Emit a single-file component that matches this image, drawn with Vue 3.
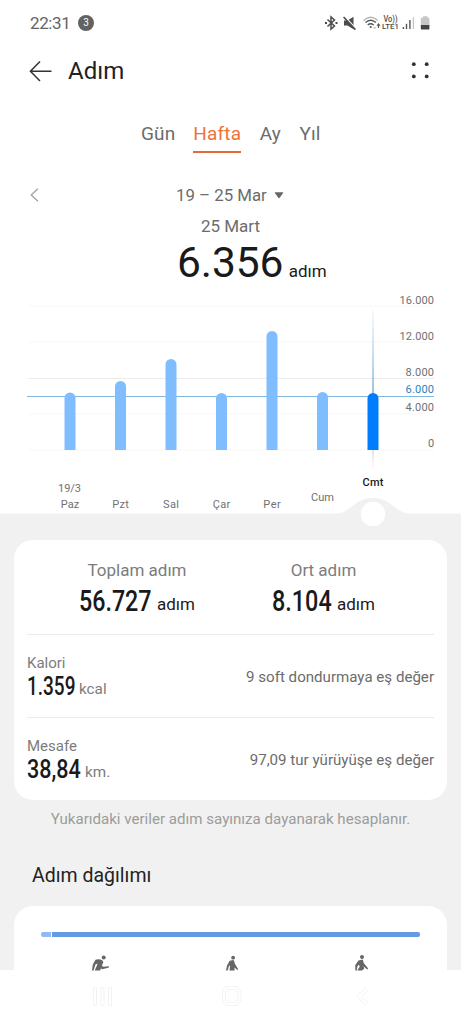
<script setup>
const grid = [306, 342, 378.5, 414, 450]
const axis = [
  { label: '16.000', y: 304, w: 34.5 },
  { label: '12.000', y: 340, w: 34.5 },
  { label: '8.000', y: 375.5, w: 28.5 },
  { label: '6.000', y: 393.3, w: 28.5, goal: true },
  { label: '4.000', y: 411.3, w: 28.5 },
  { label: '0', y: 447.3, w: 6 },
]
const bars = [
  { day: 'Paz', x: 70, top: 392.5, y: 508, w: 18.5 },
  { day: 'Pzt', x: 120.5, top: 381, y: 508, w: 16.5 },
  { day: 'Sal', x: 171, top: 359, y: 508, w: 16 },
  { day: 'Çar', x: 221.5, top: 393, y: 508, w: 17.5 },
  { day: 'Per', x: 272, top: 331, y: 508, w: 17.5 },
  { day: 'Cum', x: 322.5, top: 392, y: 501, w: 23 },
  { day: 'Cmt', x: 373, top: 393, y: 486.3, w: 21, active: true },
]
const barPath = (b) =>
  `M${b.x - 5.5} 450V${b.top + 5.5}a5.5 5.5 0 0 1 11 0V450Z`

const totals = [
  { label: 'Toplam adım', value: '56.727', kind: 'n-total' },
  { label: 'Ort adım', value: '8.104', kind: 'n-average' },
]
const metrics = [
  { label: 'Kalori', value: '1.359', kind: 'n-energy', unit: 'kcal', note: '9 soft dondurmaya eş değer' },
  { label: 'Mesafe', value: '38,84', kind: 'n-distance', unit: 'km.', note: '97,09 tur yürüyüşe eş değer' },
]
</script>

<template>
  <div class="screen">
    <div class="top">
      <div class="status">
        <span class="clock">22:31</span>
        <span class="count">3</span>
        <svg class="status-icons" width="112" height="20" viewBox="324 13 112 20">
          <g fill="none" stroke="#4c4c4c" stroke-width="1.5">
            <path d="M327.5 19.5L334.5 26L331 29V17L334.5 20L327.5 26.5" />
            <path d="M325 23h2M335.5 23h2" stroke-width="1.8" />
          </g>
          <path d="M344 20.5h3.5l6-3.8v12.6l-6-3.8H344z" fill="#4c4c4c" />
          <path d="M344 15.8L356.4 29.2" stroke="#fff" stroke-width="1.5" />
          <path d="M343.6 17L355.4 29.6" stroke="#4c4c4c" stroke-width="1.6" />
          <g fill="none" stroke-width="1.4">
            <path d="M363.5 20.5q7.2-6.6 14.4 0" stroke="#b5b5b5" />
            <path d="M365.5 22.6q5.2-4.6 10.4 0M367.7 25q3-2.5 6 0" stroke="#555" />
          </g>
          <circle cx="370.7" cy="27" r="1.1" fill="#555" />
          <path d="M378.5 23l2 2.7h-1.4v2.3h-1.2v-2.3h-1.4z" fill="#555" />
          <path d="M374.8 29.2l1.7-2.2h-3.4z" fill="#c4c4c4" />
          <text x="383.5" y="22.2" font-size="8.2" font-weight="500" textLength="14" lengthAdjust="spacingAndGlyphs" fill="#4c4c4c">Vo))</text>
          <text x="382" y="29.4" font-size="8" font-weight="500" textLength="16.8" lengthAdjust="spacingAndGlyphs" fill="#4c4c4c">LTE1</text>
          <g fill="#555">
            <rect x="402.7" y="27" width="1.4" height="2" />
            <rect x="405.8" y="23.8" width="1.4" height="5.2" />
            <rect x="409.2" y="20" width="1.4" height="9" />
            <rect x="412.8" y="17.3" width="1.1" height="11.7" fill="#bdbdbd" />
          </g>
          <path d="M423 16.3h4.5v1.4h1.9v7.8h-8.6v-7.8h2.2z" fill="#c6c6c6" />
          <path d="M420.8 25h8.6v3.4q0 1.2-1.2 1.2h-6.2q-1.2 0-1.2-1.2z" fill="#444" />
        </svg>
      </div>

      <div class="header">
        <svg width="24" height="24" viewBox="29 58 24 24">
          <path d="M51.5 70.3H31M40 60.5L30.4 70.3L40 80" fill="none" stroke="#333" stroke-width="1.5" />
        </svg>
        <h1>Adım</h1>
        <svg class="more" width="20" height="20" viewBox="410 60 20 20" fill="#333">
          <circle cx="413.8" cy="63.2" r="1.9" /><circle cx="426.7" cy="63.2" r="1.9" />
          <circle cx="413.8" cy="75.4" r="1.9" /><circle cx="426.7" cy="75.4" r="1.9" />
        </svg>
      </div>

      <div class="tabs">
        <span>Gün</span><span class="selected">Hafta</span><span>Ay</span><span>Yıl</span>
      </div>

      <div class="range">
        <svg class="prev" width="12" height="18" viewBox="0 0 12 18">
          <path d="M10 1.8L3.2 8l6.8 6.2" fill="none" stroke="#a5a5a5" stroke-width="1.4" />
        </svg>
        <span class="dates">19 – 25 Mar</span>
        <svg class="caret" width="10" height="8" viewBox="0 0 10 8">
          <path d="M1.2.2h7.6q.8 0 .3.8L5.7 5.8q-.7.8-1.4 0L.9 1Q.4.2 1.2.2z" fill="#666" />
        </svg>
      </div>
      <div class="day">25 Mart</div>
      <div class="steps"><b>6.356</b><span>adım</span></div>
    </div>

    <svg class="chart" width="461" height="245" viewBox="0 285 461 245">
      <defs>
        <linearGradient id="cursor" x1="0" x2="0" y1="310" y2="470" gradientUnits="userSpaceOnUse">
          <stop offset="0" stop-color="#6aaad8" stop-opacity="0.1" />
          <stop offset="0.5" stop-color="#5a9fd2" />
          <stop offset="0.87" stop-color="#aaa" stop-opacity="0.6" />
          <stop offset="1" stop-color="#ccc" stop-opacity="0.1" />
        </linearGradient>
      </defs>
      <path d="M0 285H461V513.5H0Z" fill="#fff" />
      <path d="M335 514C352 513 354 498 373 498S394 513 411 514Z" fill="#f1f1f1" />
      <circle cx="373" cy="514" r="12.2" fill="#fff" />
      <path v-for="(y, i) in grid" :key="y" :d="`M28 ${y}H434`" :stroke="i === 2 ? '#ececec' : '#f7f7f7'" />
      <path d="M27 396.5H434" stroke="#82b8dd" stroke-width="1.1" />
      <path d="M372.4 310h1.2v160h-1.2z" fill="url(#cursor)" />
      <path v-for="b in bars" :key="b.day" :d="barPath(b)" :fill="b.active ? '#007dff' : '#80bdff'" />
      <text v-for="a in axis" :key="a.label" class="axis" :class="{ goal: a.goal }" :x="434 - a.w" :y="a.y" :textLength="a.w">{{ a.label }}</text>
      <text class="axis" x="58" y="491.5" textLength="23">19/3</text>
      <text v-for="b in bars" :key="b.day + 't'" class="axis" :class="{ current: b.active }" :x="b.x - b.w / 2" :y="b.y" :textLength="b.w">{{ b.day }}</text>
    </svg>

    <div class="card summary">
      <div class="totals">
        <div v-for="t in totals" :key="t.label" class="total">
          <div class="total-label">{{ t.label }}</div>
          <div class="total-value">
            <div class="number" :class="t.kind"><b>{{ t.value }}</b></div>
            <span>adım</span>
          </div>
        </div>
      </div>
      <div v-for="m in metrics" :key="m.label" class="metric">
        <div>
          <div class="metric-label">{{ m.label }}</div>
          <div class="metric-value">
            <div class="number" :class="m.kind"><b>{{ m.value }}</b></div>
            <span>{{ m.unit }}</span>
          </div>
        </div>
        <div class="metric-note">{{ m.note }}</div>
      </div>
    </div>

    <p class="hint">Yukarıdaki veriler adım sayınıza dayanarak hesaplanır.</p>
    <h2>Adım dağılımı</h2>

    <div class="card spread">
      <div class="meter"><i></i><b></b></div>
      <div class="people">
        <svg width="20" height="17" viewBox="91 955 20 17" fill="#666">
          <circle cx="103.7" cy="957.5" r="2" />
          <path d="M95.5 959.8q3.8-1.2 7 .8l.9 1.7-1.5 3 1 1.5 5.9-.6.2 1.4-6.7 1.6-1.2-.8-1.2 2.2h-5.2l2-4.5.9-2.6-2.2 1-1.8 6.1h-1.6l.8-6.2z" />
        </svg>
        <svg width="20" height="17" viewBox="221 955 20 17" fill="#666">
          <circle cx="232.1" cy="957.7" r="1.9" />
          <path d="M228.7 960.8l4-.8 1.3 4 3.2 5.2-1 .9-2.6-2.7-.1 3.2h-5l.6-5.5-1.4 1.6-1 3.9h-1.7l1-5.2z" />
        </svg>
        <svg width="20" height="17" viewBox="352 955 20 17" fill="#666">
          <circle cx="362" cy="957" r="2" />
          <path d="M358.5 960.4l4.3-.9.9 3.6 4.5 5.5-.8.9-4.2-3.3 1.2 2.4-2.4 2h-4.7l2.5-4.2-1-1.6-1.3 1.4-.8 4.2h-1.4v-5.4z" />
        </svg>
      </div>
    </div>
    <div class="nav">
      <svg width="461" height="54" viewBox="0 970 461 54" fill="none" stroke="#f3f3f3" stroke-width="1">
        <path d="M93.5 987.5h3v18h-3zM101 987.5h3v18h-3zM108.5 987.5h3v18h-3z" />
        <rect x="222.5" y="986.5" width="18.5" height="19" rx="6" />
        <rect x="225.5" y="989.5" width="12.5" height="13" rx="3.5" />
        <path d="M366 987.5l-9.5 9 9.5 9M368 990l-6.5 6.5 6.5 6.5" />
      </svg>
    </div>
  </div>
</template>

<style>
body { background: #fff; }
</style>

<style scoped>
.screen {
  width: 461px;
  height: 1024px;
  overflow: hidden;
  display: flex;
  flex-direction: column;
  background: #f1f1f1;
  font-family: Roboto, "Liberation Sans", sans-serif;
  color: #6c6c6c;
}
.screen > * { flex-shrink: 0; }
svg { display: block; }
.top { height: 285px; background: #fff; }
.status { height: 46px; display: flex; align-items: center; padding: 0 25px 0 30px; }
.clock { font-size: 17px; color: #646464; letter-spacing: -0.4px; width: 48px; }
.count {
  width: 16px; height: 16px; border-radius: 50%;
  background: #626262; color: #fff;
  font-size: 10px; line-height: 16px; text-align: center;
}
.status-icons { margin-left: auto; }
.header { height: 50px; display: flex; align-items: center; padding: 0 31px 0 29px; }
h1 { margin: 0 0 0 15px; font-size: 24px; line-height: 30px; font-weight: 400; color: #222; }
.more { margin-left: auto; }
.tabs {
  height: 84px; box-sizing: border-box; padding: 25px 0 0 141px;
  display: flex; align-items: flex-start; gap: 18.5px;
  font-size: 19px; line-height: 26px; letter-spacing: 0.15px;
}
.tabs .selected { color: #f0703a; height: 30px; margin-left: -0.5px; border-bottom: 2px solid #e5693b; }
.range { height: 31px; display: flex; align-items: center; padding-left: 28px; }
.dates { margin-left: 136px; font-size: 16.8px; width: 98px; line-height: 20px; margin-top: -1px; }
.day { height: 30px; line-height: 30px; text-align: center; font-size: 17px; }
.steps { height: 44px; padding-left: 177px; display: flex; align-items: baseline; color: #1a1a1a; }
.steps b { font-size: 42.5px; line-height: 43px; font-weight: 400; letter-spacing: -0.1px; }
.steps span { margin-left: 5.5px; font-size: 17px; }
.axis { font-size: 11px; fill: #707070; }
.axis.goal { fill: #2c82c4; }
.axis.current { fill: #1a1a1a; font-weight: 500; }
.card { margin: 0 14px; background: #fff; }
.summary { margin-top: 10px; height: 260px; border-radius: 19px; box-sizing: border-box; padding: 0 13px; }
.totals { height: 94px; display: flex; padding: 0 17.5px 0 17px; justify-content: space-between; }
.total { width: 186px; text-align: center; padding-top: 19px; }
.total-label { font-size: 17px; line-height: 22px; color: #7c7c7c; }
.total-value { height: 28px; margin-top: 5px; display: flex; justify-content: center; color: #1a1a1a; }
.total-value span { margin-left: 5px; font-size: 17px; line-height: 36px; }
.number { height: 28px; color: #1a1a1a; }
.number b { display: block; width: max-content; font-weight: 500; line-height: 28px; transform-origin: 0 50%; }
.n-total, .n-average { font-size: 30px; padding-top: 1px; }
.n-total { width: 73px; }
.n-total b { transform: scaleX(0.775); }
.n-average { width: 60px; }
.n-average b { transform: scaleX(0.78); }
.n-energy, .n-distance { font-size: 25.5px; }
.n-energy b, .n-distance b { line-height: 26px; }
.n-energy { width: 48.5px; }
.n-energy b { transform: scaleX(0.745); }
.n-distance { width: 54.5px; }
.n-distance b { transform: scaleX(0.845); }
.metric { height: 82px; border-top: 1px solid #ebebeb; display: flex; justify-content: space-between; align-items: flex-start; }
.metric-label { margin-top: 18px; font-size: 15px; line-height: 20px; color: #7c7c7c; }
.metric-value { display: flex; }
.metric-value span { margin-left: 3.5px; font-size: 15.3px; line-height: 32px; color: #7c7c7c; }
.metric-note { margin-top: 31px; font-size: 15.1px; line-height: 22px; }
.hint { margin: 8px 0 0; height: 22px; line-height: 22px; font-size: 15.1px; text-align: center; color: #9c9c9c; }
h2 { margin: 31px 0 0 32px; height: 30px; line-height: 30px; font-size: 19.5px; font-weight: 400; color: #222; }
.spread { margin-top: 15px; height: 64px; border-radius: 19px 19px 0 0; position: relative; z-index: 1; }
.meter { padding: 26px 27px 0; display: flex; gap: 1px; }
.meter i { width: 10px; height: 5px; background: #92baf0; border-radius: 2px 0 0 2px; }
.meter b { flex: 1; height: 5px; background: #6499e4; border-radius: 0 2px 2px 0; }
.people { display: flex; justify-content: space-between; padding: 18px 75px 0 77px; }
.nav { height: 54px; background: #fff; }
</style>
